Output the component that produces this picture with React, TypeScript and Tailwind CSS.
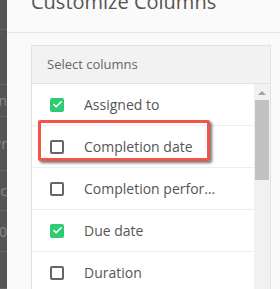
import { Check } from "lucide-react";

const rows = [
  { label: "Assigned to", checked: true },
  { label: "Completion date", checked: false },
  { label: "Completion performance", checked: false },
  { label: "Due date", checked: true },
  { label: "Duration", checked: false },
];

const bgRows = [
  { h: 30, t: "" },
  { h: 55, t: "" },
  { h: 32, t: "n" },
  { h: 54, t: "Pr" },
  { h: 40, t: "ac" },
  { h: 41, t: "30" },
  { h: 37, t: "" },
];

function CheckBox({ checked }: { checked: boolean }) {
  if (checked) {
    return (
      <span className="flex size-[14px] shrink-0 items-center justify-center rounded-[2px] bg-[#2ecc71] text-white">
        <Check className="size-[11px]" strokeWidth={3.5} />
      </span>
    );
  }
  return <span className="size-[14px] shrink-0 rounded-[2px] border-2 border-[#666]" />;
}

export default function App() {
  return (
    <div className="flex h-[289px] w-[280px] overflow-hidden font-['Open_Sans',sans-serif]">
      <div className="flex w-[7px] shrink-0 flex-col overflow-hidden bg-[#555]">
        {bgRows.map((r, i) => (
          <div
            key={i}
            className="flex shrink-0 items-center justify-end border-b border-[#666] text-[14px] text-[#8a8a8a]"
            style={{ height: r.h }}
          >
            <span className="whitespace-nowrap">{r.t}</span>
          </div>
        ))}
      </div>

      <div className="flex min-w-0 flex-1 flex-col bg-[#fafafa]">
        <div className="h-[33px] shrink-0 overflow-hidden border-b border-[#e5e5e5] pl-[24px]">
          <h1 className="-mt-[11px] whitespace-nowrap text-[20px] leading-[26px] text-[#555]">
            Customize Columns
          </h1>
        </div>

        <div className="pl-[24px] pt-[12px]">
          <div className="w-[240px] border border-[#e3e3e3]">
            <div className="flex h-[38px] items-center border-b border-[#e3e3e3] bg-[#f2f2f2] pl-[15px] text-[13px] text-[#666]">
              Select columns
            </div>
            <div className="relative flex h-[220px]">
              <div className="flex-1 bg-white">
                {rows.map((r) => (
                  <div
                    key={r.label}
                    className="flex h-[42px] items-center gap-[20px] border-b border-[#eee] pl-[18px]"
                  >
                    <CheckBox checked={r.checked} />
                    <span className="w-[135px] truncate text-[14px] text-[#555]">{r.label}</span>
                  </div>
                ))}
              </div>
              <div className="flex w-[16px] flex-col items-center bg-[#f1f1f1]">
                <span className="mt-[7px] h-0 w-0 border-x-[4px] border-b-[4px] border-x-transparent border-b-[#a3a3a3]" />
                <span className="mt-[5px] h-[80px] w-[14px] bg-[#c1c1c1]" />
              </div>
              <div className="absolute left-[6px] top-[36px] h-[41px] w-[172px] rounded-[2px] border-[3px] border-[#f25546] shadow-[2px_2px_3px_rgba(0,0,0,0.55)]" />
            </div>
          </div>
        </div>
      </div>
    </div>
  );
}
